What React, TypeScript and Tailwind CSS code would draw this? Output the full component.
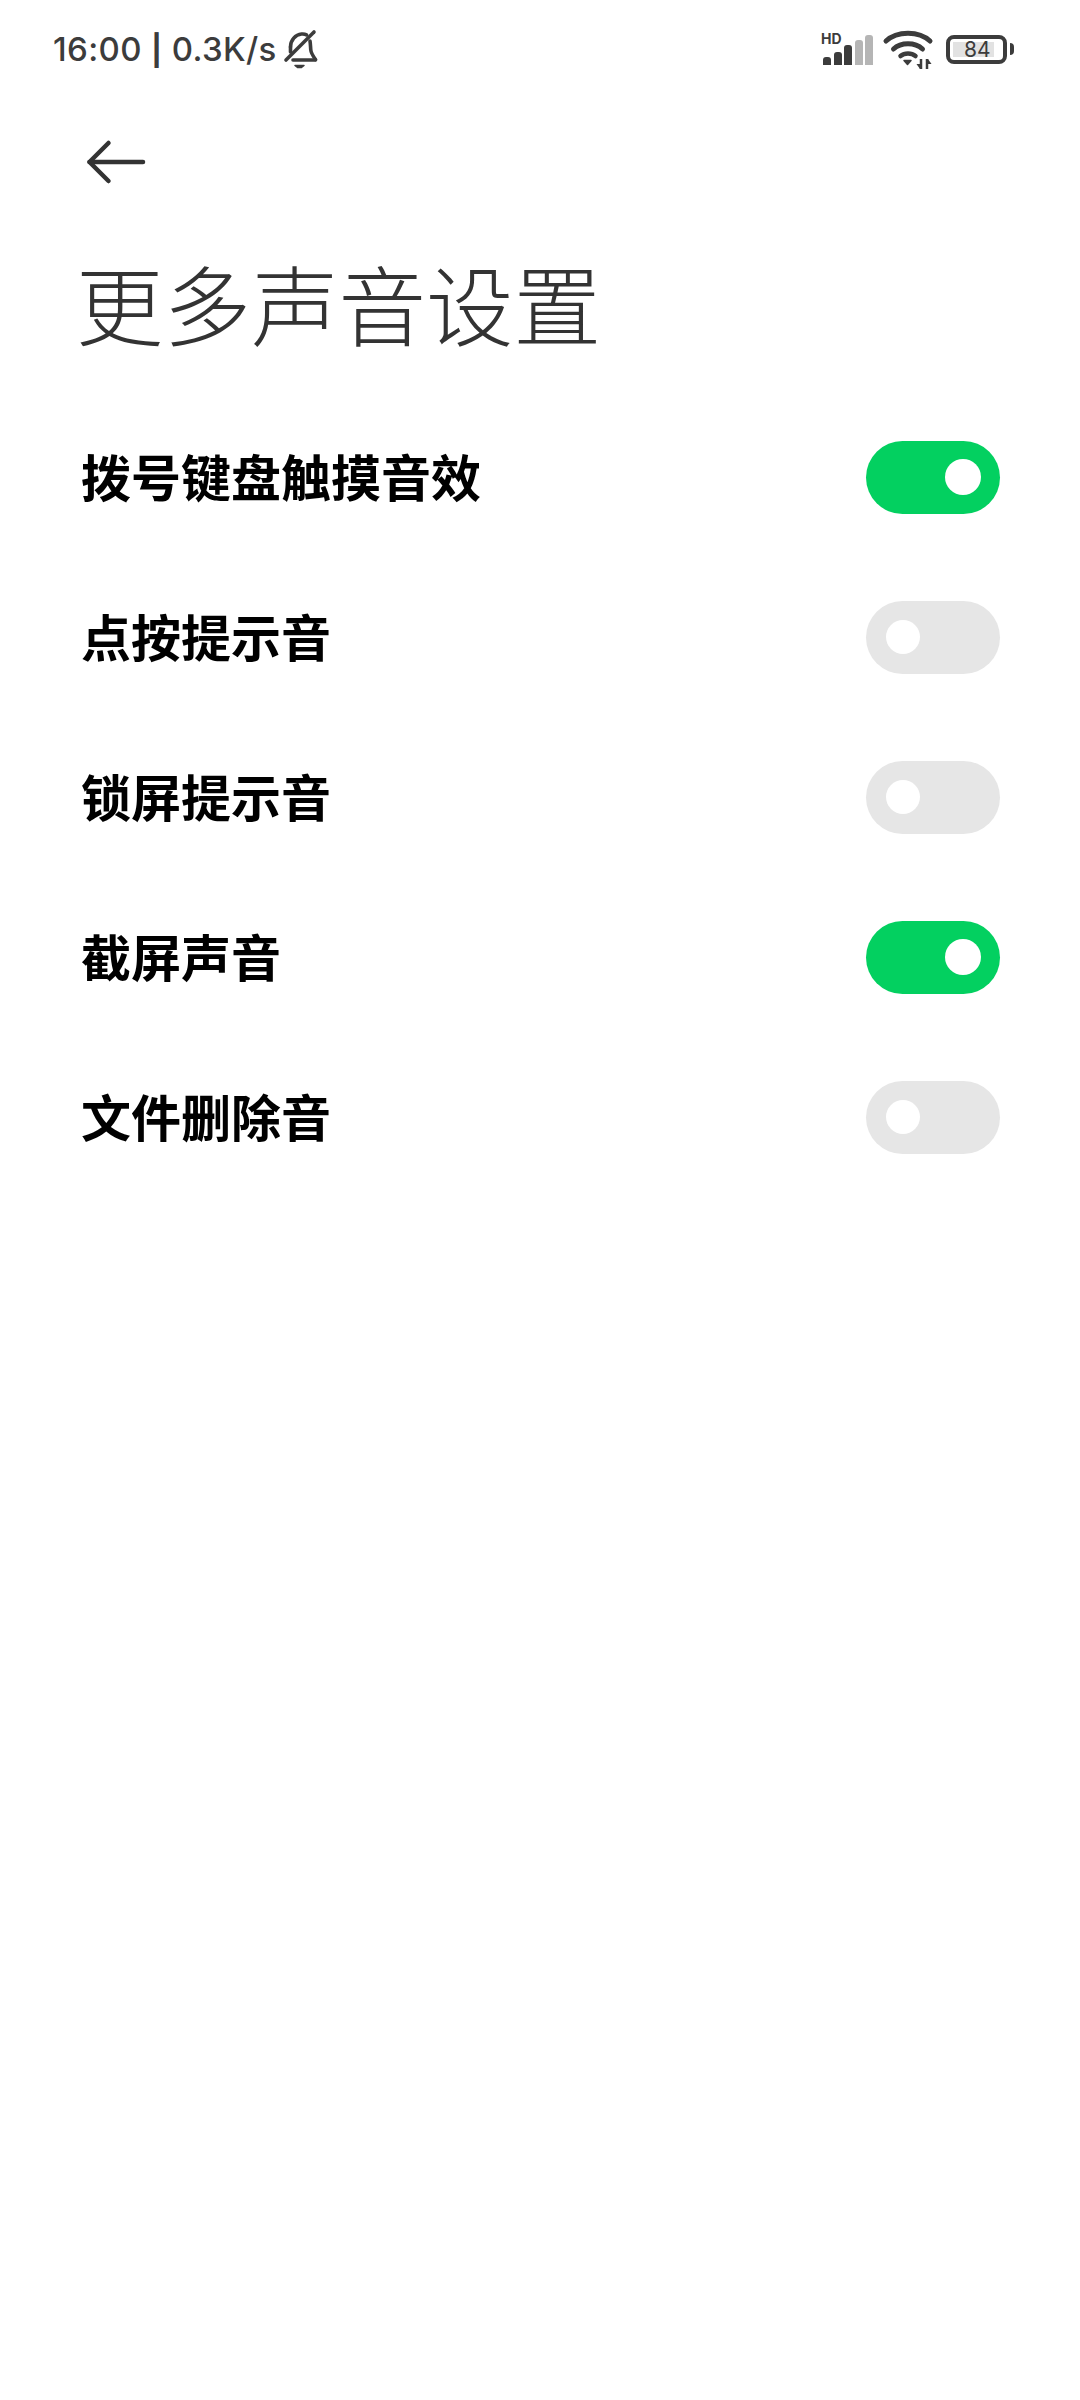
const CJK = "font-['Noto_Sans_CJK_SC','Noto_Sans',sans-serif]";

const ROWS = [
  { label: "拨号键盘触摸音效", on: true },
  { label: "点按提示音", on: false },
  { label: "锁屏提示音", on: false },
  { label: "截屏声音", on: true },
  { label: "文件删除音", on: false },
];

function Toggle({ on }: { on: boolean }) {
  if (on)
    return (
      <div className="flex h-[73px] w-[134px] items-center justify-end rounded-full bg-[#03d060] pr-[19px]">
        <div className="h-[36px] w-[36px] rounded-full bg-white" />
      </div>
    );
  return (
    <div className="flex h-[73px] w-[134px] items-center rounded-full bg-[#e6e6e6] pl-[20px]">
      <div className="h-[34px] w-[34px] rounded-full bg-white" />
    </div>
  );
}

function BellOff() {
  return (
    <svg width="44" height="44" viewBox="0 0 44 44" fill="none" stroke="#3c3c3c" strokeWidth="3.6" strokeLinecap="round" strokeLinejoin="round">
      <path d="M11.500 20c0-7 5-12.500 11-13 2-.2 3.500 0 5 .8" />
      <path d="M31 14c.5 3 .5 6 .8 9 .2 3 1.500 5 4.700 9.500" />
      <path d="M14 33h22.500" />
      <path d="M11.500 20v5" />
      <path d="M7 33 35 5" />
      <path d="M16 38.500h9l-2.500 2h-4z" fill="#3c3c3c" strokeWidth="1.500" />
    </svg>
  );
}

function Signal() {
  const bars = [
    { h: 8, c: "bg-[#3c3c3c]" },
    { h: 13, c: "bg-[#3c3c3c]" },
    { h: 20, c: "bg-[#3c3c3c]" },
    { h: 25, c: "bg-[#b5b5b5]" },
    { h: 30, c: "bg-[#b5b5b5]" },
  ];
  return (
    <div className="relative h-[32px] w-[50px]">
      <span className="absolute left-[0px] top-[-2px] font-['Inter',sans-serif] text-[14px] font-bold leading-[16px] text-[#3c3c3c]">
        HD
      </span>
      <div className="absolute bottom-[0px] left-[2px] flex items-end gap-[2.5px]">
        {bars.map((b, i) => (
          <div key={i} className={`w-[8px] rounded-t-[3px] ${b.c}`} style={{ height: b.h }} />
        ))}
      </div>
    </div>
  );
}

function Wifi() {
  return (
    <svg width="56" height="44" viewBox="0 0 56 44" fill="none" stroke="#3c3c3c" strokeLinecap="round">
      <path d="M6 14C17 3.500 39 3.500 50 14" strokeWidth="5" />
      <path d="M13.500 22C21 15 35 15 42.500 22" strokeWidth="5" />
      <path d="M20.500 29C24.500 25.500 31.500 25.500 35.500 29" strokeWidth="4.500" />
      <path d="M24 33.500h7l-3.500 4z" fill="#3c3c3c" strokeWidth="1.500" strokeLinejoin="round" />
      <path d="M41 32v10" strokeWidth="2.500" strokeLinecap="butt" />
      <path d="M47 32v10" strokeWidth="2.500" strokeLinecap="butt" />
      <path d="M36.500 37h3.500v5z" fill="#3c3c3c" stroke="none" />
      <path d="M51.500 37H48v-5z" fill="#3c3c3c" stroke="none" />
    </svg>
  );
}

function Battery() {
  return (
    <div className="flex items-center gap-[3px]">
      <div className="flex h-[29px] w-[61px] items-center rounded-[8px] border-[4px] border-[#3c3c3c] pl-[3px]">
        <div className="h-[15px] w-[41px] whitespace-nowrap bg-[#e2e2e2] pl-[11px] font-['Inter',sans-serif] text-[21px] leading-[15px] text-[#3c3c3c]">
          84
        </div>
      </div>
      <div className="h-[12px] w-[4px] rounded-r-full bg-[#3c3c3c]" />
    </div>
  );
}

export default function App() {
  return (
    <div className={`flex h-[2400px] w-[1080px] flex-col bg-white ${CJK}`}>
      <div className="flex h-[98px] items-center justify-between pl-[53px] pr-[66px]">
        <div className="flex items-center gap-[2px]">
          <span className="whitespace-pre font-['Inter',sans-serif] text-[33px] font-medium leading-none tracking-[0.35px] text-[#3c3c3c]">
            16:00 <span className="text-[30px] font-bold">|</span> 0.3K/s
          </span>
          <BellOff />
        </div>
        <div className="flex items-center">
          <div className="-ml-[1px]">
            <Signal />
          </div>
          <div className="ml-[9px] mr-[10px]">
            <Wifi />
          </div>
          <Battery />
        </div>
      </div>

      <div className="mt-[41px] pl-[86px]">
        <svg width="62" height="46" viewBox="0 0 62 46" fill="none" stroke="#333" strokeWidth="4.500" strokeLinecap="round" strokeLinejoin="round">
          <path d="M22.500 4 3.500 23l19 19" />
          <path d="M3.500 23h53.500" />
        </svg>
      </div>

      <h1 className="mt-[52px] pl-[76px] text-[87.5px] font-extralight leading-[130px] text-[#333]">
        更多声音设置
      </h1>

      <div className="mt-[30px] flex flex-col pl-[81px] pr-[80px]">
        {ROWS.map((r) => (
          <div key={r.label} className="flex h-[160px] items-center justify-between">
            <span className="pb-[4px] text-[50px] font-bold leading-none text-black">{r.label}</span>
            <Toggle on={r.on} />
          </div>
        ))}
      </div>
    </div>
  );
}
